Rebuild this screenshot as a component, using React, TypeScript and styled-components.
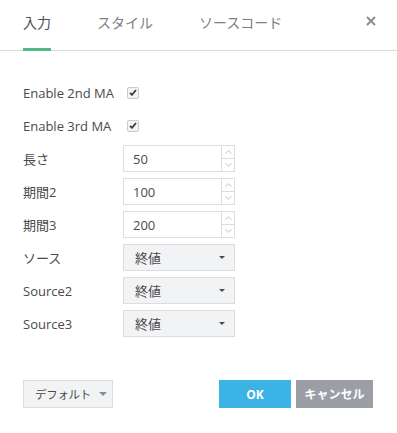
import styled, { createGlobalStyle } from "styled-components";

const GlobalStyle = createGlobalStyle`
  html, body {
    margin: 0;
    padding: 0;
    background: #fff;
  }
  body {
    font-family: "Open Sans", "Noto Sans CJK JP", sans-serif;
    font-size: 13px;
    color: #4a4a4a;
  }
`;

const Dialog = styled.div`
  width: 397px;
  height: 433px;
  display: flex;
  flex-direction: column;
  box-sizing: border-box;
`;

const TabBar = styled.div`
  display: flex;
  align-items: flex-end;
  height: 51px;
  padding: 0 23px;
  border-bottom: 1px solid #dadbde;
  box-sizing: border-box;
  position: relative;
`;

const Tab = styled.div<{ $active?: boolean }>`
  font-family: "Noto Sans CJK JP", sans-serif;
  font-size: 14px;
  color: ${(p) => (p.$active ? "#4b5059" : "#7b7f87")};
  padding: 0 0 16px;
  margin-right: 46px;
  margin-bottom: -1px;
  border-bottom: 3px solid ${(p) => (p.$active ? "#53b987" : "transparent")};
  line-height: 20px;
`;

const Close = styled.div`
  position: absolute;
  right: 19px;
  top: 14px;
  width: 14px;
  height: 14px;
`;

const Body = styled.div`
  display: flex;
  flex-direction: column;
  gap: 6px;
  padding: 28px 23px 0;
  flex: 1;
`;

const Row = styled.div`
  display: flex;
  align-items: center;
  height: 27px;
`;

const Label = styled.div<{ $w?: number }>`
  width: ${(p) => p.$w ?? 100}px;
  font-size: 13px;
  color: #4a4a4a;
  font-family: "Open Sans", "Noto Sans CJK JP", sans-serif;
`;

const Check = styled.div`
  width: 10px;
  height: 10px;
  border: 1px solid #c9cacd;
  border-radius: 2px;
  background: #f4f4f5;
  display: flex;
  align-items: center;
  justify-content: center;
`;

const NumberBox = styled.div`
  width: 112px;
  height: 27px;
  box-sizing: border-box;
  border: 1px solid #dcdde0;
  display: flex;
`;

const NumberValue = styled.div`
  flex: 1;
  padding-left: 9px;
  display: flex;
  align-items: center;
  font-size: 13px;
  color: #4a4a4a;
`;

const Spinner = styled.div`
  width: 12px;
  border-left: 1px solid #dcdde0;
  display: flex;
  flex-direction: column;
`;

const SpinHalf = styled.div<{ $top?: boolean }>`
  flex: 1;
  display: flex;
  align-items: center;
  justify-content: center;
  border-bottom: ${(p) => (p.$top ? "1px solid #dcdde0" : "none")};
`;

const Select = styled.div`
  width: 112px;
  height: 27px;
  box-sizing: border-box;
  border: 1px solid #dcdde0;
  background: #f2f3f5;
  display: flex;
  align-items: center;
  justify-content: space-between;
  padding: 0 9px 0 11px;
  font-family: "Noto Sans CJK JP", sans-serif;
  font-size: 13px;
  color: #4a4a4a;
`;

const Caret = styled.div<{ $color?: string; $size?: number }>`
  width: 0;
  height: 0;
  flex-shrink: 0;
  border-left: ${(p) => p.$size ?? 4}px solid transparent;
  border-right: ${(p) => p.$size ?? 4}px solid transparent;
  border-top: ${(p) => p.$size ?? 4}px solid ${(p) => p.$color ?? "#4a4a4a"};
`;

const Footer = styled.div`
  display: flex;
  align-items: center;
  padding: 0 24px 25px 23px;
`;

const DefaultButton = styled.div`
  width: 90px;
  height: 28px;
  box-sizing: border-box;
  border: 1px solid #dcdde0;
  background: #f2f3f5;
  display: flex;
  align-items: center;
  gap: 8px;
  padding-left: 11px;
  white-space: nowrap;
  font-family: "Noto Sans CJK JP", sans-serif;
  font-size: 11.5px;
  letter-spacing: -0.3px;
  color: #4a4a4a;
`;

const Spacer = styled.div`
  flex: 1;
`;

const Button = styled.div<{ $bg: string; $w: number }>`
  width: ${(p) => p.$w}px;
  height: 28px;
  background: ${(p) => p.$bg};
  color: #fff;
  font-weight: 700;
  font-family: "Open Sans", "Noto Sans CJK JP", sans-serif;
  font-size: 12px;
  display: flex;
  align-items: center;
  justify-content: center;
  margin-left: 5px;
`;

function Tick() {
  return (
    <svg width="8" height="7" viewBox="0 0 8 7">
      <path d="M1 3.8 L3 5.8 L7 1" stroke="#3c3c3c" strokeWidth="1.8" fill="none" />
    </svg>
  );
}

function NumberInput({ value }: { value: string }) {
  return (
    <NumberBox>
      <NumberValue>{value}</NumberValue>
      <Spinner>
        <SpinHalf $top>
          <svg width="7" height="4" viewBox="0 0 7 4">
            <path d="M0.5 3.5 L3.5 0.8 L6.5 3.5" stroke="#b8bcc4" strokeWidth="0.9" fill="none" />
          </svg>
        </SpinHalf>
        <SpinHalf>
          <svg width="7" height="4" viewBox="0 0 7 4">
            <path d="M0.5 0.5 L3.5 3.2 L6.5 0.5" stroke="#b8bcc4" strokeWidth="0.9" fill="none" />
          </svg>
        </SpinHalf>
      </Spinner>
    </NumberBox>
  );
}

function Dropdown({ value }: { value: string }) {
  return (
    <Select>
      {value}
      <Caret $size={3.5} />
    </Select>
  );
}

export default function App() {
  return (
    <>
      <GlobalStyle />
      <Dialog>
        <TabBar>
          <Tab $active>入力</Tab>
          <Tab>スタイル</Tab>
          <Tab>ソースコード</Tab>
          <Close>
            <svg width="14" height="14" viewBox="0 0 14 14">
              <path d="M3 3 L11 11 M11 3 L3 11" stroke="#8a8d94" strokeWidth="2" />
            </svg>
          </Close>
        </TabBar>
        <Body>
          <Row>
            <Label $w={104}>Enable 2nd MA</Label>
            <Check>
              <Tick />
            </Check>
          </Row>
          <Row>
            <Label $w={104}>Enable 3rd MA</Label>
            <Check>
              <Tick />
            </Check>
          </Row>
          <Row>
            <Label>長さ</Label>
            <NumberInput value="50" />
          </Row>
          <Row>
            <Label>期間2</Label>
            <NumberInput value="100" />
          </Row>
          <Row>
            <Label>期間3</Label>
            <NumberInput value="200" />
          </Row>
          <Row>
            <Label>ソース</Label>
            <Dropdown value="終値" />
          </Row>
          <Row>
            <Label>Source2</Label>
            <Dropdown value="終値" />
          </Row>
          <Row>
            <Label>Source3</Label>
            <Dropdown value="終値" />
          </Row>
        </Body>
        <Footer>
          <DefaultButton>
            デフォルト
            <Caret $color="#8a8d94" />
          </DefaultButton>
          <Spacer />
          <Button $bg="#3bb3e4" $w={72}>OK</Button>
          <Button $bg="#9c9ea5" $w={77}>キャンセル</Button>
        </Footer>
      </Dialog>
    </>
  );
}
